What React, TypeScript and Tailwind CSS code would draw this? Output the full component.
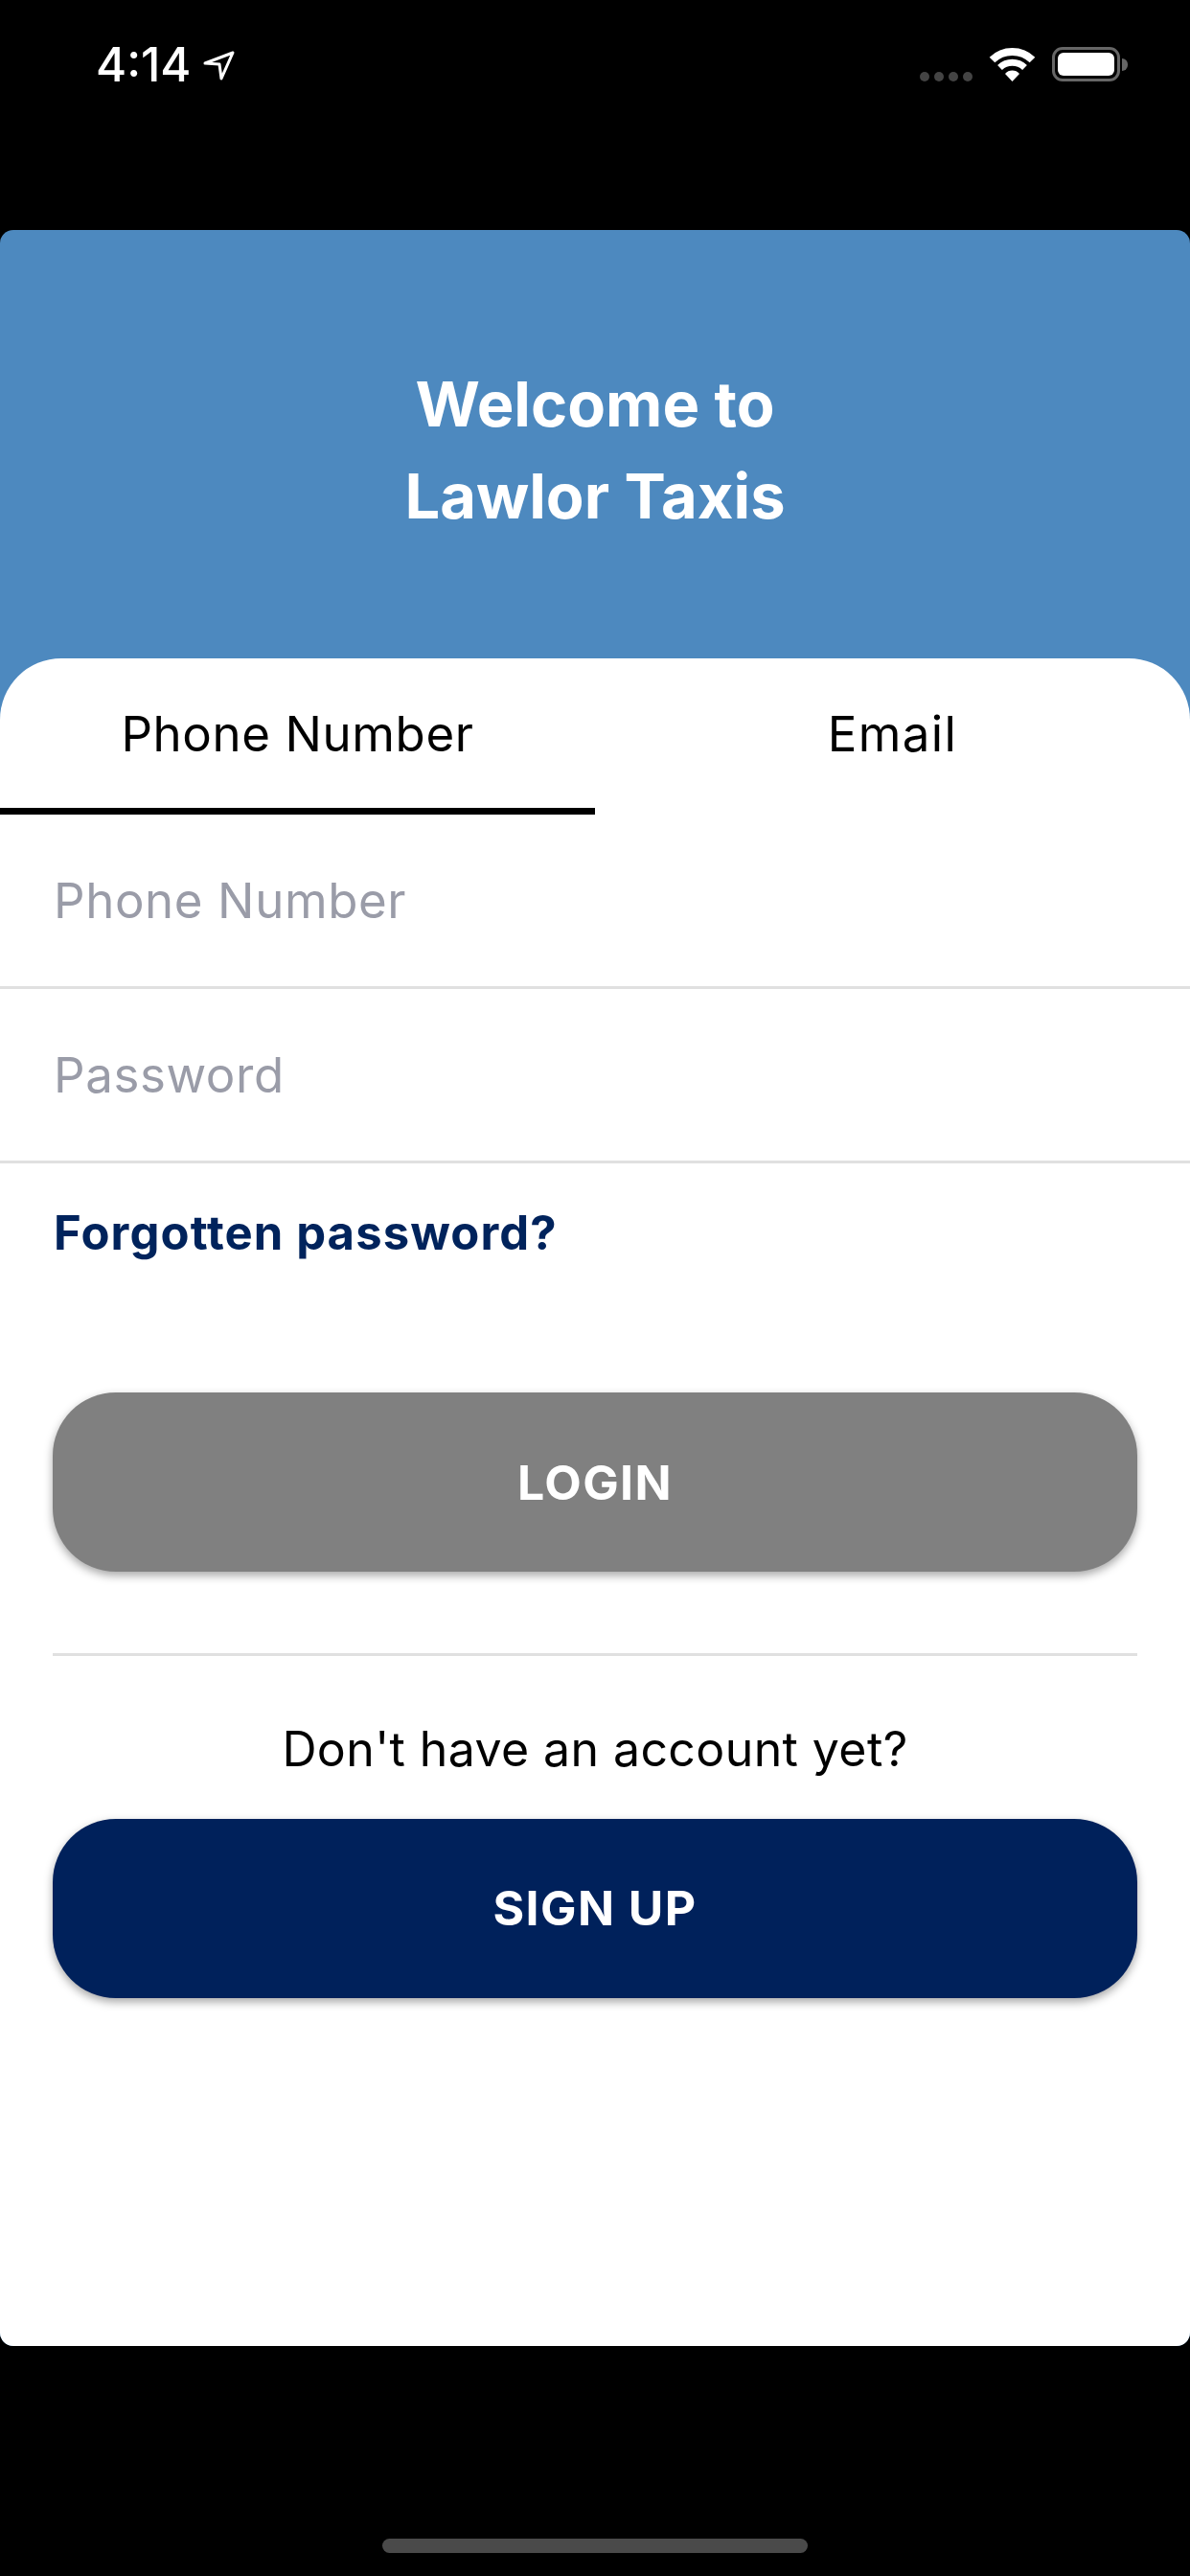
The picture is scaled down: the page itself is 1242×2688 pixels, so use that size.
function StatusBar() {
  return (
    <div className="flex h-[240px] items-start justify-between pl-[100px] pr-[65px] pt-[49px]">
      <div className="flex items-center gap-[12px]">
        <span className="text-[49px] leading-[38px] font-medium text-white">4:14</span>
        <svg width="34" height="31" viewBox="0 0 34 31" fill="none" stroke="white" strokeWidth="3" strokeLinejoin="round">
          <path d="M2 13 L31 2 L19 29 L17 14 Z" />
        </svg>
      </div>
      <div className="flex items-end">
        <div className="flex gap-[5px]">
          <span className="h-[10px] w-[10px] rounded-full bg-[#444444]" />
          <span className="h-[10px] w-[10px] rounded-full bg-[#444444]" />
          <span className="h-[10px] w-[10px] rounded-full bg-[#444444]" />
          <span className="h-[10px] w-[10px] rounded-full bg-[#444444]" />
        </div>
        <svg className="ml-[17px]" width="49" height="36" viewBox="0 0 49 36" fill="none" stroke="white">
          <path d="M3.5 13.5 A30 30 0 0 1 45.5 13.5" strokeWidth="8" />
          <path d="M11.5 21.5 A19 19 0 0 1 37.5 21.5" strokeWidth="7" />
          <path d="M17 28 A10 10 0 0 1 32 28 L24.5 36 Z" fill="white" stroke="none" />
        </svg>
        <div className="ml-[17px] flex items-center">
          <div className="h-[36px] w-[71px] rounded-[11px] border-[3px] border-[#666666] p-[3px]">
            <div className="h-full w-full rounded-[6px] bg-white" />
          </div>
          <div className="ml-[2px] h-[13px] w-[6px] rounded-r-full bg-[#666666]" />
        </div>
      </div>
    </div>
  );
}

function Field({ placeholder }: { placeholder: string }) {
  return (
    <div className="flex h-[182px] items-center border-b-[3px] border-[#e0e0e0] px-[56px] pt-[2px]">
      <input
        placeholder={placeholder}
        className="w-full bg-transparent text-[51px] tracking-[0.6px] text-black outline-none placeholder:text-[#9a9ca8]"
      />
    </div>
  );
}

export default function App() {
  return (
    <div className="flex h-[2688px] w-[1242px] flex-col bg-black font-['Inter',sans-serif]">
      <StatusBar />

      <main className="flex h-[2208px] flex-col overflow-hidden rounded-[14px] bg-[#4d89bf]">
        <header className="flex h-[447px] flex-col items-center pt-[134px] text-[65px] leading-[96px] font-bold text-white">
          <h1>Welcome to</h1>
          <h1>Lawlor Taxis</h1>
        </header>

        <section className="flex flex-1 flex-col rounded-t-[64px] bg-white">
          <div className="flex h-[163px]">
            <button className="flex-1 border-b-[7px] border-black pt-[3px] text-[51px] tracking-[0.6px] text-black">Phone Number</button>
            <button className="flex-1 border-b-[7px] border-transparent pt-[3px] text-[51px] tracking-[1.4px] text-black">Email</button>
          </div>

          <Field placeholder="Phone Number" />
          <Field placeholder="Password" />

          <a className="mt-[45px] block px-[56px] text-[49px] leading-[56px] font-bold tracking-[1.1px] text-[#00235c]">Forgotten password?</a>

          <div className="mt-[138px] flex flex-col px-[55px]">
            <button className="flex h-[187px] items-center justify-center rounded-[66px] bg-[#808080] pt-[2px] text-[50px] font-bold tracking-[1.4px] text-white shadow-[0_4px_10px_rgba(0,0,0,0.35)]">
              LOGIN
            </button>
            <div className="mt-[85px] h-[3px] bg-[#e0e0e0]" />
            <p className="mt-[67px] text-center text-[50px] leading-[60px] tracking-[0.4px] text-black">Don't have an account yet?</p>
            <button className="mt-[43px] flex h-[187px] items-center justify-center rounded-[66px] bg-[#00215b] text-[50px] font-bold tracking-[1.4px] text-white shadow-[0_4px_10px_rgba(0,0,0,0.35)]">
              SIGN UP
            </button>
          </div>
        </section>
      </main>

      <div className="flex flex-1 justify-center pt-[201px]">
        <div className="h-[15px] w-[444px] rounded-full bg-[#4a4a4a]" />
      </div>
    </div>
  );
}
